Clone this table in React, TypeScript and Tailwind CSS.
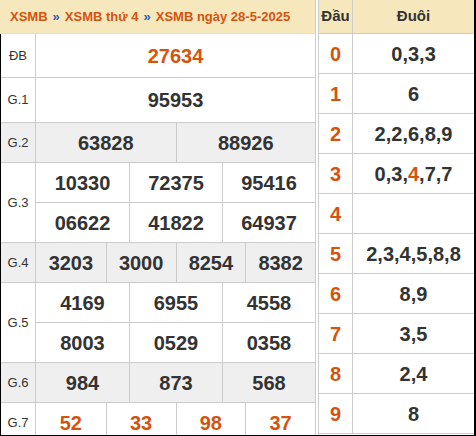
const ORANGE = "text-[#d3540f]";

type Cell = { v: string; hot?: boolean };

interface PrizeRow {
  label: string;
  cols: 1 | 2 | 3 | 4;
  lines: Cell[][];
  gray?: boolean;
  h: string;
}

const prizes: PrizeRow[] = [
  { label: "ĐB", cols: 1, lines: [[{ v: "27634", hot: true }]], h: "h-[44px]" },
  { label: "G.1", cols: 1, lines: [[{ v: "95953" }]], h: "h-[45px]" },
  { label: "G.2", cols: 2, lines: [[{ v: "63828" }, { v: "88926" }]], gray: true, h: "h-[40px]" },
  {
    label: "G.3",
    cols: 3,
    lines: [
      [{ v: "10330" }, { v: "72375" }, { v: "95416" }],
      [{ v: "06622" }, { v: "41822" }, { v: "64937" }],
    ],
    h: "h-[40px]",
  },
  { label: "G.4", cols: 4, lines: [[{ v: "3203" }, { v: "3000" }, { v: "8254" }, { v: "8382" }]], gray: true, h: "h-[40px]" },
  {
    label: "G.5",
    cols: 3,
    lines: [
      [{ v: "4169" }, { v: "6955" }, { v: "4558" }],
      [{ v: "8003" }, { v: "0529" }, { v: "0358" }],
    ],
    h: "h-[40px]",
  },
  { label: "G.6", cols: 3, lines: [[{ v: "984" }, { v: "873" }, { v: "568" }]], gray: true, h: "h-[40px]" },
  {
    label: "G.7",
    cols: 4,
    lines: [[{ v: "52", hot: true }, { v: "33", hot: true }, { v: "98", hot: true }, { v: "37", hot: true }]],
    h: "h-[40px]",
  },
];

const gridCols: Record<number, string> = {
  1: "grid-cols-1",
  2: "grid-cols-2",
  3: "grid-cols-3",
  4: "grid-cols-4",
};

// đầu -> đuôi, with the index of an orange digit if any
const loto: { head: string; tail: string[]; hot?: number }[] = [
  { head: "0", tail: ["0", "3", "3"] },
  { head: "1", tail: ["6"] },
  { head: "2", tail: ["2", "2", "6", "8", "9"] },
  { head: "3", tail: ["0", "3", "4", "7", "7"], hot: 2 },
  { head: "4", tail: [] },
  { head: "5", tail: ["2", "3", "4", "5", "8", "8"] },
  { head: "6", tail: ["8", "9"] },
  { head: "7", tail: ["3", "5"] },
  { head: "8", tail: ["2", "4"] },
  { head: "9", tail: ["8"] },
];

function PrizeTable() {
  return (
    <div className="w-[316px] shrink-0 flex flex-col border-r border-[#cccccc]">
      <div className="h-[34px] shrink-0 bg-[#f7e7bd] flex items-center pl-[10px] text-[13px] font-bold border-b border-[#dddddd] whitespace-nowrap">
        <span className={ORANGE}>XSMB</span>
        <span className="text-[#1f5fbf] mx-[5px]">»</span>
        <span className={ORANGE}>XSMB thứ 4</span>
        <span className="text-[#1f5fbf] mx-[5px]">»</span>
        <span className={ORANGE}>XSMB ngày 28-5-2025</span>
      </div>
      <div className="flex flex-col border-l border-black">
        {prizes.map((p) => (
          <div key={p.label} className={`flex shrink-0 ${p.gray ? "bg-[#efefef]" : "bg-white"}`}>
            <div className="w-[35px] shrink-0 flex items-center justify-center text-[13px] text-[#333333] border-r border-b border-[#cccccc]">
              {p.label}
            </div>
            <div className="flex-1 flex flex-col">
              {p.lines.map((line, li) => (
                <div key={li} className={`grid ${gridCols[p.cols]} ${p.h} border-b border-[#cccccc]`}>
                  {line.map((c, ci) => (
                    <div
                      key={ci}
                      className={`flex items-center justify-center text-[20px] font-bold ${
                        ci > 0 ? "border-l border-[#cccccc]" : ""
                      } ${c.hot ? ORANGE : "text-[#333333]"}`}
                    >
                      {c.v}
                    </div>
                  ))}
                </div>
              ))}
            </div>
          </div>
        ))}
      </div>
    </div>
  );
}

function LotoTable() {
  return (
    <div className="flex-1 flex flex-col border-l border-[#cccccc]">
      <div className="h-[34px] shrink-0 flex bg-[#f7e7bd] border-b border-[#cccccc] text-[15px] font-bold text-[#333333]">
        <div className="w-[34px] shrink-0 flex items-center justify-center border-r border-[#cccccc]">Đầu</div>
        <div className="flex-1 flex items-center justify-center">Đuôi</div>
      </div>
      {loto.map((r) => (
        <div key={r.head} className="h-[40px] shrink-0 flex border-b border-[#cccccc] text-[20px] font-bold">
          <div className={`w-[34px] shrink-0 flex items-center justify-center border-r border-[#cccccc] ${ORANGE}`}>
            {r.head}
          </div>
          <div className="flex-1 flex items-center justify-center text-[#333333]">
            {r.tail.map((d, i) => (
              <span key={i}>
                {i > 0 && ","}
                <span className={i === r.hot ? ORANGE : ""}>{d}</span>
              </span>
            ))}
          </div>
        </div>
      ))}
    </div>
  );
}

export default function App() {
  return (
    <div className="w-[476px] h-[436px] overflow-hidden bg-white flex gap-[2px] border-r-2 border-b border-black font-['Liberation_Sans',Arial,sans-serif]">
      <PrizeTable />
      <LotoTable />
    </div>
  );
}
